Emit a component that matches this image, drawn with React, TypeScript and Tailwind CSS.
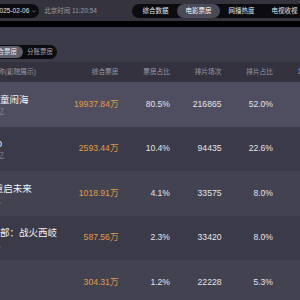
import React from 'react'

type Row = {
    title: string
    sub: string
    box: string
    share: string
    shows: string
    showShare: string
    avg: string
}

const rows: Row[] = [
    { title: '哪吒之魔童闹海', sub: '总票房48.39亿', box: '19937.84万', share: '80.5%', shows: '216865', showShare: '52.0%', avg: '21' },
    { title: '唐探1900', sub: '总票房24.12亿', box: '2593.44万', share: '10.4%', shows: '94435', showShare: '22.6%', avg: '7' },
    { title: '熊出没·重启未来', sub: '总票房6.21亿', box: '1018.91万', share: '4.1%', shows: '33575', showShare: '8.0%', avg: '8' },
    { title: '封神第二部：战火西岐', sub: '总票房9.87亿', box: '587.56万', share: '2.3%', shows: '33420', showShare: '8.0%', avg: '5' },
    { title: '蛟龙行动', sub: '总票房3.1亿', box: '304.31万', share: '1.2%', shows: '22228', showShare: '5.3%', avg: '4' },
]

const tabs = ['综合数据', '电影票房', '网播热度', '电视收视']

const font = { fontFamily: '"Liberation Sans", "Noto Sans CJK SC", sans-serif' }

export default function App() {
    return (
        <div className="w-[300px] h-[300px] overflow-hidden bg-[#3b3a48]" style={font}>
            <div className="w-[420px] -ml-[38px]">
                {/* top bar */}
                <div className="h-[21px] flex items-center pl-[26px] bg-[#34333e]">
                    <div className="h-[14px] rounded-full bg-[#0c0c10] pl-[8px] pr-[3px] flex items-center gap-[3px] text-[6.5px] text-[#e2e2e6]">
                        <span>2025-02-06</span>
                        <svg width="4" height="3" viewBox="0 0 4 3" className="mt-px">
                            <path d="M0.5 0.6 L2 2.2 L3.5 0.6" stroke="#a5a5ad" strokeWidth="0.6" fill="none" />
                        </svg>
                    </div>
                    <span className="ml-[5px] text-[6.5px] text-[#9c9ba6]">北京时间 11:20:54</span>
                    <div className="ml-[35px] h-[14px] rounded-full bg-[#0c0c10] px-[2px] flex items-center">
                        {tabs.map((t) => (
                            <div
                                key={t}
                                className={`w-[43px] h-[14px] rounded-full flex items-center justify-center text-[6.5px] ${t === '电影票房' ? 'bg-[#4b4a59] text-white' : 'text-[#e6e6ea]'}`}
                            >
                                {t}
                            </div>
                        ))}
                    </div>
                </div>
                <div className="h-[6px] bg-black" />

                {/* sub tabs */}
                <div className="pt-[10px] pl-[22px] h-[35px]">
                    <div className="inline-flex h-[14px] items-center rounded-full bg-[#0c0c10] p-px pr-[4px] gap-[4px]">
                        <div className="h-[12px] px-[6px] rounded-full bg-[#605f6d] flex items-center text-[6.5px] text-[#ececf0]">综合票房</div>
                        <div className="text-[6.5px] text-[#a9a8b3]">分账票房</div>
                    </div>
                </div>

                {/* header */}
                <div className="h-[20px] flex items-center bg-[#33323e] text-[6.7px] text-[#9d9ca8]">
                    <div className="w-[105px] pl-[16px]">影片名称(影院展示)</div>
                    <div className="w-[51.5px] text-right">综合票房</div>
                    <div className="w-[51.5px] text-right">票房占比</div>
                    <div className="w-[51.5px] text-right">排片场次</div>
                    <div className="w-[51.5px] text-right">排片占比</div>
                    <div className="w-[51.5px] text-right">场均人次</div>
                </div>

                {rows.map((r, i) => (
                    <div
                        key={r.title}
                        className={`h-[44.5px] flex items-center ${i === 0 ? 'bg-[#4f4e60]' : i % 2 === 1 ? 'bg-[#3b3a48]' : 'bg-[#434251]'}`}
                    >
                        <div className="w-[105px] flex flex-col justify-center pt-px">
                            <div className="text-[9.5px] leading-[11px] text-[#f2f2f4]">{r.title}</div>
                            <div className="text-[6.5px] leading-[9px] mt-[2px] text-[#8f8e9a]">{r.sub}</div>
                        </div>
                        <div className="w-[51.5px] text-right text-[8.6px] text-[#e39a4a]">{r.box}</div>
                        <div className="w-[51.5px] text-right text-[8.6px] text-[#e4e4e8]">{r.share}</div>
                        <div className="w-[51.5px] text-right text-[8.6px] text-[#e4e4e8]">{r.shows}</div>
                        <div className="w-[51.5px] text-right text-[8.6px] text-[#e4e4e8]">{r.showShare}</div>
                        <div className="w-[51.5px] text-right text-[8.6px] text-[#e4e4e8]">{r.avg}</div>
                    </div>
                ))}
            </div>
        </div>
    )
}
